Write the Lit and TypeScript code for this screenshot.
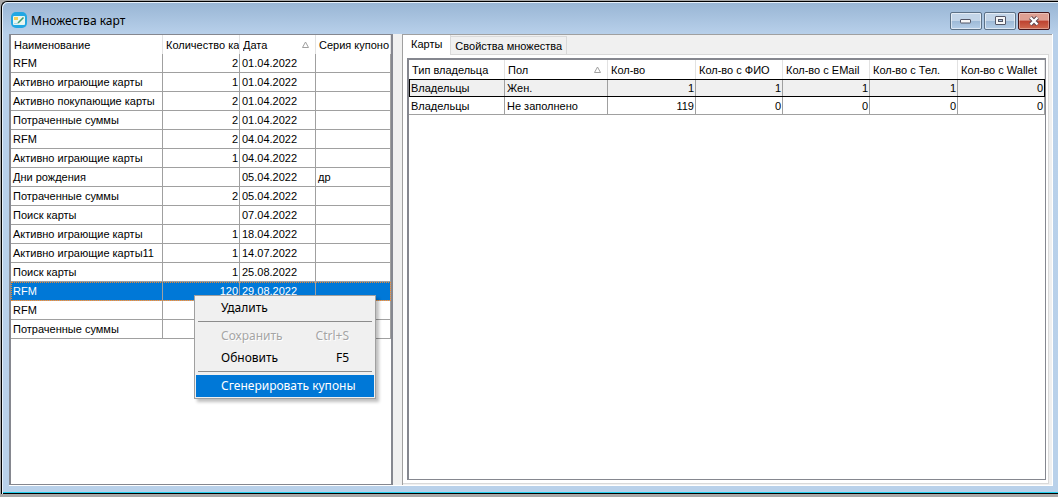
import { LitElement, html, css, nothing } from "lit";
import { customElement, property, state } from "lit/decorators.js";
import { classMap } from "lit/directives/class-map.js";

interface CardSet {
  name: string;
  count: string;
  date: string;
  series?: string;
}

const SETS: CardSet[] = [
  { name: "RFM", count: "2", date: "01.04.2022" },
  { name: "Активно играющие карты", count: "1", date: "01.04.2022" },
  { name: "Активно покупающие карты", count: "2", date: "01.04.2022" },
  { name: "Потраченные суммы", count: "2", date: "01.04.2022" },
  { name: "RFM", count: "2", date: "04.04.2022" },
  { name: "Активно играющие карты", count: "1", date: "04.04.2022" },
  { name: "Дни рождения", count: "", date: "05.04.2022", series: "др" },
  { name: "Потраченные суммы", count: "2", date: "05.04.2022" },
  { name: "Поиск карты", count: "", date: "07.04.2022" },
  { name: "Активно играющие карты", count: "1", date: "18.04.2022" },
  { name: "Активно играющие карты11", count: "1", date: "14.07.2022" },
  { name: "Поиск карты", count: "1", date: "25.08.2022" },
  { name: "RFM", count: "120", date: "29.08.2022" },
  { name: "RFM", count: "", date: "" },
  { name: "Потраченные суммы", count: "", date: "" },
];

const OWNERS = [
  ["Владельцы", "Жен.", "1", "1", "1", "1", "0"],
  ["Владельцы", "Не заполнено", "119", "0", "0", "0", "0"],
];

const OWNER_HEADS = [
  "Тип владельца",
  "Пол",
  "Кол-во",
  "Кол-во с ФИО",
  "Кол-во с EMail",
  "Кол-во с Тел.",
  "Кол-во с Wallet",
];

const sortMark = html`<svg class="sort" width="9" height="8" viewBox="0 0 9 8" aria-hidden="true">
  <path d="M4.5 1 L1.5 6.5 H7.5 Z" fill="none" stroke="#a0a0a0" />
</svg>`;

const gridStyles = css`
  :host {
    display: block;
    min-width: 0;
    min-height: 0;
    overflow: hidden;
    background: #fff;
    border: 1px solid #85878f;
    font: 11px/16px "Liberation Sans", Arial, sans-serif;
    color: #000;
  }
  table {
    width: 100%;
    table-layout: fixed;
    border-collapse: separate;
    border-spacing: 0;
  }
  th,
  td {
    box-sizing: border-box;
    padding: 0 2px;
    overflow: hidden;
    white-space: nowrap;
    text-align: left;
    font-weight: normal;
    border-right: 1px solid #a0a0a0;
    border-bottom: 1px solid #a0a0a0;
  }
  th {
    padding: 0 0 0 3px;
    border-right-color: #e2e2e2;
    border-bottom: 0;
  }
  .num {
    text-align: right;
    padding-right: 1px;
  }
  .head {
    display: flex;
    align-items: center;
    justify-content: space-between;
    overflow: hidden;
  }
  .sort {
    flex: none;
    margin-right: 5px;
  }
`;

@customElement("card-sets-grid")
export class CardSetsGrid extends LitElement {
  @property({ type: Number }) selected = 12;

  static styles = [
    gridStyles,
    css`
      :host {
        border-width: 1px 2px 1px 2px;
      }
      th,
      td {
        height: 19px;
      }
      .c-name {
        width: 152px;
      }
      .c-count {
        width: 77px;
      }
      .c-date {
        width: 76px;
      }
      .selected td {
        background: #0078d7;
        color: #fff;
      }
      .selected {
        outline: 1px dotted #f08a30;
        outline-offset: -1px;
      }
    `,
  ];

  render() {
    return html`<table>
      <colgroup>
        <col class="c-name" />
        <col class="c-count" />
        <col class="c-date" />
        <col />
      </colgroup>
      <thead>
        <tr>
          <th>Наименование</th>
          <th>Количество ка</th>
          <th><div class="head">Дата${sortMark}</div></th>
          <th>Серия купоно</th>
        </tr>
      </thead>
      <tbody>
        ${SETS.map(
          (s, i) => html`<tr
            class=${classMap({ selected: i === this.selected })}
            @click=${() => (this.selected = i)}
          >
            <td>${s.name}</td>
            <td class="num">${s.count}</td>
            <td>${s.date}</td>
            <td>${s.series ?? nothing}</td>
          </tr>`
        )}
      </tbody>
    </table>`;
  }
}

@customElement("owners-grid")
export class OwnersGrid extends LitElement {
  static styles = [
    gridStyles,
    css`
      :host {
        border-width: 2px 1px 1px 2px;
      }
      th {
        height: 19px;
      }
      td {
        height: 18px;
      }
      .c-type {
        width: 96px;
      }
      .c-sex {
        width: 103px;
      }
      .c-wide {
        width: 88px;
      }
      .c-mid {
        width: 87px;
      }
      .current td {
        background: #f0f0f0;
      }
      .current {
        outline: 1px solid #000;
        outline-offset: -1px;
      }
    `,
  ];

  render() {
    return html`<table>
      <colgroup>
        <col class="c-type" />
        <col class="c-sex" />
        <col class="c-wide" />
        <col class="c-mid" />
        <col class="c-mid" />
        <col class="c-wide" />
        <col />
      </colgroup>
      <thead>
        <tr>
          ${OWNER_HEADS.map(
            (h, i) => html`<th>${i === 1 ? html`<div class="head">${h}${sortMark}</div>` : h}</th>`
          )}
        </tr>
      </thead>
      <tbody>
        ${OWNERS.map(
          (row, r) => html`<tr class=${classMap({ current: r === 0 })}>
            ${row.map((v, i) => html`<td class=${classMap({ num: i > 1 })}>${v}</td>`)}
          </tr>`
        )}
      </tbody>
    </table>`;
  }
}

@customElement("context-menu")
export class ContextMenu extends LitElement {
  static styles = css`
    :host {
      display: block;
      box-sizing: border-box;
      width: 182px;
      padding: 1px;
      background: #f0f0f0;
      border: 1px solid #a0a0a0;
      box-shadow: 3px 3px 3px rgba(0, 0, 0, 0.25);
      font: 12px/22px "Noto Sans", "Open Sans", sans-serif;
    }
    button {
      display: flex;
      justify-content: space-between;
      width: 100%;
      height: 22px;
      padding: 0 25px;
      border: 0;
      background: none;
      color: #000;
      font: inherit;
      white-space: nowrap;
    }
    button:disabled {
      color: #a5a5a5;
      text-shadow: 1px 1px #fff;
    }
    .active {
      background: #0078d7;
      color: #fff;
    }
    hr {
      height: 1px;
      margin: 2px 2px 3px;
      border: 0;
      background: #8c8c8c;
    }
  `;

  render() {
    return html`<div role="menu">
      <button role="menuitem">Удалить</button>
      <hr />
      <button role="menuitem" disabled><span>Сохранить</span><span>Ctrl+S</span></button>
      <button role="menuitem"><span>Обновить</span><span>F5</span></button>
      <hr />
      <button role="menuitem" class="active">Сгенерировать купоны</button>
    </div>`;
  }
}

@customElement("app-root")
export class AppRoot extends LitElement {
  @state() private tab = 0;

  static styles = css`
    :host {
      display: block;
      box-sizing: border-box;
      height: 100vh;
      padding: 1px 0 3px 1px;
      background: #a8a8a8;
      position: relative;
      overflow: hidden;
    }
    .window {
      box-sizing: border-box;
      height: 100%;
      display: flex;
      flex-direction: column;
      padding: 0 5px 8px 7px;
      border: solid #000;
      border-width: 1px 0 0 1px;
      border-radius: 6px 0 0 0;
      background: linear-gradient(#98b5d4, #b8d0ea 32px, #b9d1ea);
      box-shadow: inset 1px 1px #e6f0fa, inset 0 -1px #000, inset 0 -2px #22d0ee;
    }
    header {
      display: flex;
      align-items: center;
      height: 32px;
      padding: 0 3px 0 2px;
      gap: 2px;
    }
    h1 {
      flex: 1;
      margin: 0 1px;
      padding-top: 6px;
      font: 12px/16px "Noto Sans", "Open Sans", sans-serif;
      color: #000;
    }
    .logo,
    .ctl {
      margin-top: 5px;
      flex: none;
    }
    .ctl {
      box-sizing: border-box;
      display: grid;
      place-items: center;
      width: 32px;
      height: 18px;
      padding: 0;
      border: 1px solid #5c7186;
      border-radius: 2px;
      background: linear-gradient(#c3d5e8 50%, #9db9d6 50%, #b5cee8);
      box-shadow: inset 0 0 0 1px rgba(255, 255, 255, 0.55);
    }
    .close {
      border-color: #43161b;
      background: linear-gradient(#dfa093 45%, #bd4230 50%, #cf6a50);
      box-shadow: inset 0 0 0 1px rgba(255, 255, 255, 0.35);
    }
    main {
      flex: 1;
      min-height: 0;
      display: flex;
      gap: 9px;
      background: #f0f0f0;
      border: solid #fff;
      border-width: 0 1px 1px 0;
    }
    card-sets-grid {
      flex: none;
      width: 380px;
    }
    .details {
      flex: 1;
      min-width: 0;
      display: flex;
      flex-direction: column;
      padding: 0 3px 1px 0;
      border: solid #a0a0a0;
      border-width: 1px 0 0 1px;
      font: 11px/16px "Liberation Sans", Arial, sans-serif;
    }
    .tabs {
      display: flex;
      align-items: flex-end;
      height: 20px;
    }
    .tabs::after {
      content: "";
      flex: 1;
      border-bottom: 1px solid #d9d9d9;
    }
    .tab {
      height: 19px;
      padding: 0 4px;
      border: 1px solid #d9d9d9;
      border-left: 0;
      background: #f0f0f0;
      color: #000;
      font: inherit;
      white-space: nowrap;
    }
    .tab.on {
      height: 20px;
      padding: 0 8px 2px;
      border: 0;
      border-right: 1px solid #d9d9d9;
      background: #fff;
    }
    .page {
      flex: 1;
      min-height: 0;
      display: flex;
      padding: 3px 2px 3px 4px;
      background: #fff;
      border: solid #d9d9d9;
      border-width: 0 1px 1px 0;
    }
    owners-grid {
      flex: 1;
    }
    context-menu {
      position: absolute;
      left: 194px;
      top: 295px;
    }
  `;

  render() {
    return html`<div class="window">
        <header>
          <svg class="logo" width="17" height="17" viewBox="0 0 17 17" aria-hidden="true">
            <rect width="16" height="16" rx="5" fill="#22a7e3" />
            <rect x="2" y="4" width="12" height="9" rx="1" fill="#e9f6ef" />
            <rect x="3" y="5" width="4" height="3" fill="#f3cf57" />
            <path d="M3 11.5h4" stroke="#a9d8e8" />
            <path d="M7 11 L12.5 5.5" stroke="#3f9a72" stroke-width="1.6" />
          </svg>
          <h1>Множества карт</h1>
          <button class="ctl" aria-label="Свернуть">
            <svg width="12" height="6" viewBox="0 0 12 6">
              <rect x=".5" y="1.5" width="10" height="3.5" rx=".5" fill="#f7f7f7" stroke="#535666" />
            </svg>
          </button>
          <button class="ctl" aria-label="Развернуть">
            <svg width="11" height="10" viewBox="0 0 11 10">
              <rect x=".5" y=".5" width="10" height="8" rx=".5" fill="#f7f7f7" stroke="#535666" />
              <rect x="3.5" y="3.5" width="4" height="2" fill="#a9c1db" stroke="#535666" />
            </svg>
          </button>
          <button class="ctl close" aria-label="Закрыть">
            <svg width="12" height="10" viewBox="0 0 12 10">
              <path d="M2.5 1.5 L9.5 8.5 M9.5 1.5 L2.5 8.5" stroke="#5a4650" stroke-width="4.2" />
              <path d="M2.5 1.5 L9.5 8.5 M9.5 1.5 L2.5 8.5" stroke="#fff" stroke-width="2.4" />
            </svg>
          </button>
        </header>
        <main>
          <card-sets-grid></card-sets-grid>
          <section class="details">
            <div class="tabs" role="tablist">
              ${["Карты", "Свойства множества"].map(
                (t, i) => html`<button
                  role="tab"
                  aria-selected=${i === this.tab}
                  class=${classMap({ tab: true, on: i === this.tab })}
                  @click=${() => (this.tab = i)}
                >
                  ${t}
                </button>`
              )}
            </div>
            <div class="page" role="tabpanel"><owners-grid></owners-grid></div>
          </section>
        </main>
      </div>
      <context-menu></context-menu>`;
  }
}
